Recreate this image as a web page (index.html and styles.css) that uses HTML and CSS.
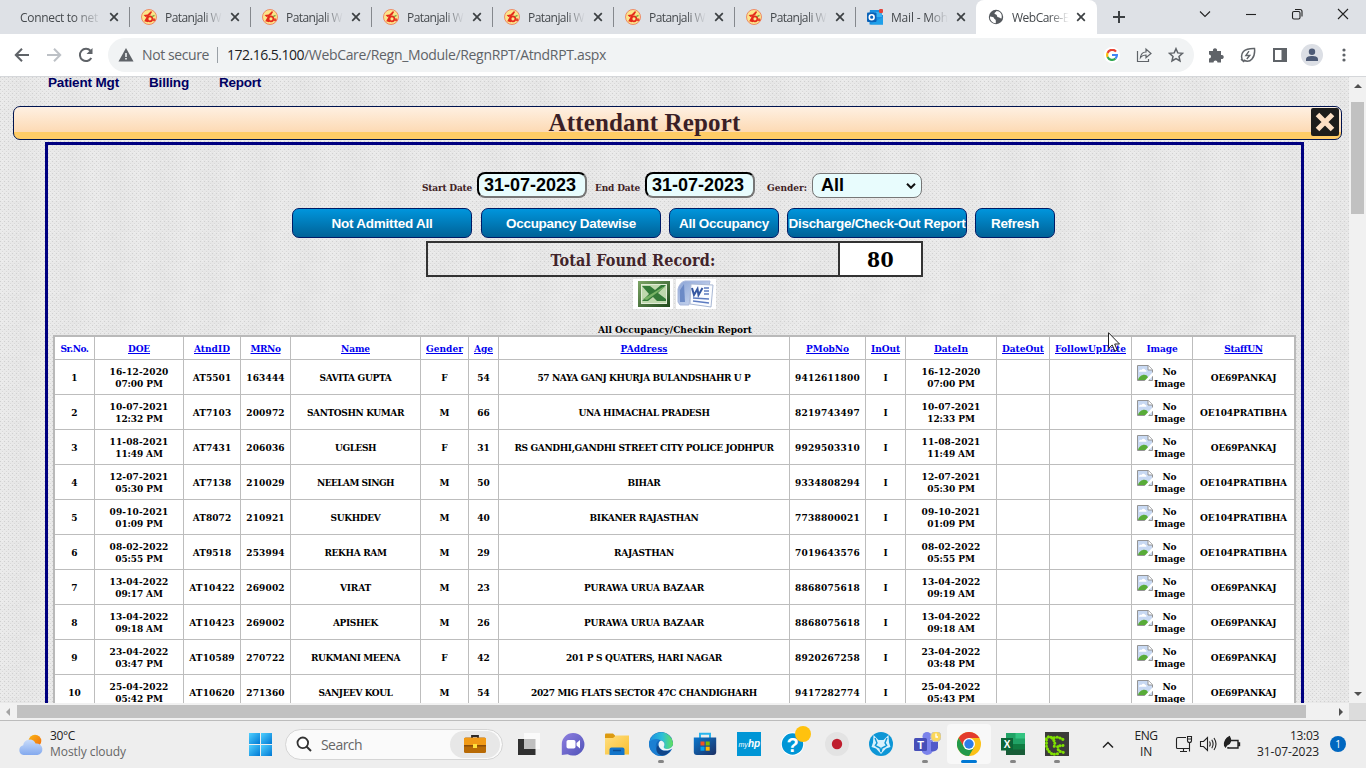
FILE: index.html
```html
<!DOCTYPE html>
<html lang="en">
<head>
<meta charset="utf-8">
<title>WebCare</title>
<link rel="stylesheet" href="styles.css">
</head>
<body>
<svg class="defs" width="0" height="0">
  <defs>
    <linearGradient id="gWin" x1="0" y1="0" x2="1" y2="1"><stop offset="0" stop-color="#4fd0ff"/><stop offset="1" stop-color="#0078d4"/></linearGradient>
    <linearGradient id="gCloud" x1="0" y1="0" x2="0" y2="1"><stop offset="0" stop-color="#c9dcfa"/><stop offset="1" stop-color="#83a9ee"/></linearGradient>
    <linearGradient id="gSun" x1="0" y1="0" x2="1" y2="1"><stop offset="0" stop-color="#fbb813"/><stop offset="1" stop-color="#f06a10"/></linearGradient>
    <linearGradient id="gChat" x1="0" y1="0" x2="1" y2="1"><stop offset="0" stop-color="#8f7fe0"/><stop offset="1" stop-color="#4f52b8"/></linearGradient>
    <linearGradient id="gEdge" x1="0" y1="0" x2="1" y2="0"><stop offset="0" stop-color="#1c8fe0"/><stop offset=".55" stop-color="#2cbfd8"/><stop offset="1" stop-color="#62e05c"/></linearGradient>
    <linearGradient id="gStore" x1="0" y1="0" x2="1" y2="1"><stop offset="0" stop-color="#0a78cf"/><stop offset="1" stop-color="#1c2f63"/></linearGradient>
    <linearGradient id="gFold" x1="0" y1="0" x2="1" y2="1"><stop offset="0" stop-color="#ffdf80"/><stop offset="1" stop-color="#f9be2e"/></linearGradient>
    <linearGradient id="gXl" x1="0" y1="0" x2="1" y2="1"><stop offset="0" stop-color="#7da566"/><stop offset="1" stop-color="#1f4a1c"/></linearGradient>
    <linearGradient id="gWd" x1="0" y1="0" x2="1" y2="1"><stop offset="0" stop-color="#8ba4d6"/><stop offset="1" stop-color="#dbe5f6"/></linearGradient>
    <symbol id="x" viewBox="0 0 10 10"><path d="M1.2 1.2 8.8 8.8M8.8 1.2 1.2 8.8" stroke="#3c4043" stroke-width="1.7"/></symbol>
    <symbol id="pat" viewBox="0 0 16 16"><circle cx="8" cy="8" r="7.5" fill="#fbe58a" stroke="#ee8a68" stroke-width="1"/><path d="M2.600 6 6.500 5.600 9.800 2.200l1.400.6-2 3.200-2.700 1.500L4.500 8Z" fill="#e52b1c"/><path d="M6.800 7 4.200 11.800l2.200.6Z" fill="#e52b1c" stroke="#e52b1c" stroke-width="1.300"/><circle cx="8.900" cy="9.800" r="2.500" fill="none" stroke="#e52b1c" stroke-width="1.700"/><circle cx="13" cy="10.800" r="1.500" fill="#e8452e"/><path d="m11 7.600 2.500-1.200" stroke="#7aa940" stroke-width="1.500"/></symbol>
    <symbol id="broken" viewBox="0 0 16 16"><path d="M.5.5h10.800l4.200 4.200V15.500H.500Z" fill="#c8d9f3" stroke="#949494"/><path d="M11 .5v4.500h4.500" fill="#fff" stroke="#949494"/><path d="M2 6.800c0-2 2-2.200 2.600-1.800 1-2.200 3.600-1 3.600 0 1.500 0 1.800 1.800.8 1.800Z" fill="#fff"/><path d="M1 15c1-4 5.500-6.500 8.800-4.500L13 15Z" fill="#58ac38"/><path d="m16 7-8.500 9H11l5-5.200Z" fill="#fff"/></symbol>
  </defs>
</svg>

<header class="browser">
  <div class="tabs">
    <div class="tab first"><span class="title"><span data-w="78">Connect to net</span></span><svg class="close"><use href="#x"/></svg></div>
    <div class="tab"><svg class="fav"><use href="#pat"/></svg><span class="title"><span data-w="56">Patanjali W</span></span><svg class="close"><use href="#x"/></svg></div>
    <div class="tab"><svg class="fav"><use href="#pat"/></svg><span class="title"><span data-w="56">Patanjali W</span></span><svg class="close"><use href="#x"/></svg></div>
    <div class="tab"><svg class="fav"><use href="#pat"/></svg><span class="title"><span data-w="56">Patanjali W</span></span><svg class="close"><use href="#x"/></svg></div>
    <div class="tab"><svg class="fav"><use href="#pat"/></svg><span class="title"><span data-w="56">Patanjali W</span></span><svg class="close"><use href="#x"/></svg></div>
    <div class="tab"><svg class="fav"><use href="#pat"/></svg><span class="title"><span data-w="56">Patanjali W</span></span><svg class="close"><use href="#x"/></svg></div>
    <div class="tab"><svg class="fav"><use href="#pat"/></svg><span class="title"><span data-w="56">Patanjali W</span></span><svg class="close"><use href="#x"/></svg></div>
    <div class="tab plain"><svg class="fav" viewBox="0 0 16 16"><path d="M3 1h9v5h4v9.500H2.500V4Z" fill="#1a8fe0"/><path d="M7 3h8v5H7z" fill="#36b1f2"/><path d="m3 15.500 13-7.500v7.500Z" fill="#1fa0ea"/><rect y="3.500" width="9.500" height="9.500" rx="1" fill="#0a62b8"/><circle cx="4.700" cy="8.200" r="2.400" fill="none" stroke="#fff" stroke-width="1.600"/><circle cx="14" cy="2" r="2.200" fill="#e2453c"/></svg><span class="title"><span data-w="57">Mail - Moh</span></span><svg class="close"><use href="#x"/></svg></div>
    <div class="tab active"><svg class="fav" viewBox="0 0 16 16"><circle cx="8" cy="8" r="7.200" fill="#55595e"/><path d="M2 7.500c2 .2 4 .4 4.200 2 .1 1 1.600.6 1.600 2v2.700C4.500 14 1.600 11.500 2 7.500ZM8.500 2c-.4 1.200-2 1-2 2.500 0 1 1.600.7 2.200 1.500.6.900 0 2 1.600 2.200 1.800.1 1.500 1.300 3.200 1.300C14.800 5.500 12 2 8.500 2Z" fill="#fff"/></svg><span class="title"><span data-w="57">WebCare-E</span></span><svg class="close"><use href="#x"/></svg></div>
    <svg class="plus" viewBox="0 0 12 12"><path d="M6 0v12M0 6h12" stroke="#3c4043" stroke-width="2"/></svg>
    <div class="winbtns">
      <svg viewBox="0 0 12 12"><path d="m1 3.500 5 5 5-5" class="thin"/></svg>
      <svg viewBox="0 0 12 12"><path d="M1 6.500h10" class="thin"/></svg>
      <svg viewBox="0 0 12 12"><rect x="1.500" y="3.500" width="7.500" height="7.500" rx="1.500" class="thin"/><path d="M4 1.500h5a2 2 0 0 1 2 2V8.500" class="thin"/></svg>
      <svg viewBox="0 0 12 12"><path d="m1 1 10 10M11 1 1 11" class="thin"/></svg>
    </div>
  </div>
  <div class="toolbar">
    <svg class="nav" viewBox="0 0 16 16"><path d="M15 8H2.500M8 1.800 1.800 8 8 14.200" fill="none" stroke="#5f6368" stroke-width="2"/></svg>
    <svg class="nav" viewBox="0 0 16 16"><path d="M1 8h12.500M8 1.800 14.200 8 8 14.200" fill="none" stroke="#bdc1c6" stroke-width="2"/></svg>
    <svg class="nav" viewBox="0 0 16 16"><path d="M13.300 11A6.100 6.100 0 1 1 12.500 3.800" fill="none" stroke="#5f6368" stroke-width="2"/><path d="M14.500 1v6h-6Z" fill="#5f6368"/></svg>
    <div class="omni">
      <svg class="warn" viewBox="0 0 16 14"><path d="M8 0 15.500 13.500H.500Z" fill="#5f6368"/><path d="M8 5v4M8 10v1.600" stroke="#f1f3f4" stroke-width="1.600"/></svg>
      <span class="ns"><span data-w="67">Not secure</span></span>
      <span class="url"><span class="host" data-w="77">172.16.5.100</span><span data-w="302">/WebCare/Regn_Module/RegnRPT/AtndRPT.aspx</span></span>
      <div class="omniicons">
        <span class="goog"><svg width="12" height="12" viewBox="0 0 12 12" fill="none" stroke-width="2.200"><path d="M10 2.600A4.900 4.900 0 0 0 1.600 4" stroke="#ea4335"/><path d="M1.600 4a5 5 0 0 0 0 4" stroke="#fbbc05"/><path d="M1.600 8A4.900 4.900 0 0 0 9.500 9.500" stroke="#34a853"/><path d="M9.500 9.500A4.900 4.900 0 0 0 10.900 6H6" stroke="#4285f4"/></svg></span>
        <svg width="16" height="16" viewBox="0 0 16 16" fill="none" stroke="#5f6368" stroke-width="1.200"><path d="M1.500 4v10.500h11V12"/><path d="M4.500 10.500C5 6.500 7 5 10 5V2l5 4.500-5 4.300V8C7.500 8 6 8.500 4.500 10.500Z"/></svg>
        <svg width="16" height="16" viewBox="0 0 16 16" fill="none" stroke="#5f6368" stroke-width="1.500"><path d="m8 1.700 1.800 4.200 4.700.4-3.500 3.100 1 4.600L8 11.600 4 14l1-4.600L1.500 6.300l4.700-.4Z"/></svg>
      </div>
    </div>
    <div class="ext">
      <svg viewBox="0 0 16 16"><path d="M1 4h4a2.100 2.100 0 1 1 4 0h4v4a2.100 2.100 0 1 1 0 4v3.500H9.500a2 2 0 1 0-4 0H1V11.500a2 2 0 1 0 0-4Z" fill="#5f6368"/></svg>
      <svg viewBox="0 0 16 16" fill="none" stroke="#5f6368" stroke-width="1.500"><path d="M2.500 13.500C-.5 6 4 1.200 14.500 1.500 15.500 10 10.500 17 3.500 13M1 12.200 4.200 15"/><path d="M9 4.200 5.800 8.500h4L6.800 12" stroke-width="1.300"/></svg>
      <svg viewBox="0 0 16 16"><path d="M2 2h12v12H2z" fill="none" stroke="#5f6368" stroke-width="2"/><path d="M9.500 2H14v12H9.500z" fill="#5f6368"/></svg>
      <span class="avatar"><svg viewBox="0 0 14 14" width="14" height="14"><circle cx="7" cy="3.700" r="3.200" fill="#4e5b76"/><path d="M1 13V11.500C1 8.500 4 8 7 8s6 .5 6 3.500V13Z" fill="#4e5b76"/></svg></span>
      <svg viewBox="0 0 16 16" fill="#5f6368"><circle cx="8" cy="3" r="1.600"/><circle cx="8" cy="8" r="1.600"/><circle cx="8" cy="13" r="1.600"/></svg>
    </div>
  </div>
</header>

<main class="viewport">
  <div class="page">
    <nav class="menu"><span data-w="71">Patient Mgt</span><span data-w="40">Billing</span><span data-w="42">Report</span></nav>
    <div class="titlebar"><h1><span data-w="192">Attendant Report</span></h1>
      <svg class="closebox" viewBox="0 0 28 28"><rect width="28" height="28" rx="2" fill="#1d1d1b"/><path d="m6.500 6.500 15 15M21.500 6.500l-15 15" stroke="#fde0c4" stroke-width="5"/></svg>
    </div>
    <section class="panel">
      <div class="filters">
        <label><span data-w="50">Start Date</span></label><div class="date">31-07-2023</div>
        <label class="l2"><span data-w="45">End Date</span></label><div class="date">31-07-2023</div>
        <label class="l3"><span data-w="40">Gender:</span></label><div class="select">All<svg viewBox="0 0 10 6"><path d="m1 .8 4 4 4-4" fill="none" stroke="#111" stroke-width="2"/></svg></div>
      </div>
      <div class="buttons">
        <button class="w180"><span data-w="101">Not Admitted All</span></button>
        <button class="w180 g1"><span data-w="130">Occupancy Datewise</span></button>
        <button class="w110"><span data-w="90">All Occupancy</span></button>
        <button class="w180"><span data-w="177">Discharge/Check-Out Report</span></button>
        <button class="w80"><span data-w="48">Refresh</span></button>
      </div>
      <div class="total"><div class="lbl"><span data-w="165">Total Found Record:</span></div><div class="num"><span data-w="27">80</span></div></div>
      <div class="exports">
        <svg viewBox="0 0 40 30"><path d="M0 0h40v30H0z" fill="#fff"/><path d="M5 2h32v26H5z" fill="url(#gXl)"/><path d="M8 5h26v20H8z" fill="#e2edd8"/><path d="M9 6h24v18H9z" fill="#bfd8ad"/><path d="M9 7h8l5 4 6-5h5l-8 8 8 6v2h-9l-4-4-5 4H9l7-7Z" fill="#347a38"/><path d="m10 20 20-12h2L14 21Z" fill="#78b365"/></svg>
        <svg viewBox="0 0 40 30"><path d="M0 0h40v30H0z" fill="#fff"/><path d="M9 2h25l-1 5-18 0-2 19H4L2 23V10Q4 3 9 2Z" fill="url(#gWd)" stroke="#a9b8dc"/><path d="M8 5 4 11v12h5Z" fill="#6c8ac6"/><path d="m15 5 22 1-2 22-21-3Z" fill="#fafcff" stroke="#a9b8d4"/><path d="m16 9 2 7 3.500-6 1 6 4-7" fill="none" stroke="#3557a0" stroke-width="2"/><path d="M28 9h5M28 12h5M28 15h5M17 19l16 1M17 22l16 2" stroke="#5c7bc0" stroke-width="1.400"/></svg>
      </div>
      <div class="caption"><span data-w="154">All Occupancy/Checkin Report</span></div>
      <table class="grid">
        <colgroup><col class="c40"><col class="c89"><col class="c57"><col class="c50"><col class="c130"><col class="c48"><col class="c30"><col class="c291"><col class="c76"><col class="c40"><col class="c91"><col class="c53"><col class="c82"><col class="c61"><col class="c101"></colgroup>
        <thead><tr><th><span data-w="28">Sr.No.</span></th><th><a data-w="22">DOE</a></th><th><a data-w="36">AtndID</a></th><th><a data-w="30">MRNo</a></th><th><a data-w="29">Name</a></th><th><a data-w="37">Gender</a></th><th><a data-w="19">Age</a></th><th><a data-w="47">PAddress</a></th><th><a data-w="43">PMobNo</a></th><th><a data-w="29">InOut</a></th><th><a data-w="34">DateIn</a></th><th><a data-w="42">DateOut</a></th><th><a data-w="71">FollowUpDate</a></th><th><span data-w="31">Image</span></th><th><a data-w="38">StaffUN</a></th></tr></thead>
        <tbody id="rows"></tbody>
      </table>
    </section>
  </div>
  <div class="vscroll"><svg viewBox="0 0 8 4"><path d="m0 4 4-4 4 4Z"/></svg><div class="vthumb"></div><svg class="down" viewBox="0 0 8 4"><path d="m0 0 4 4 4-4Z"/></svg></div>
  <svg class="cursor" viewBox="0 0 12 20"><path d="M.5.700v15.800l3.700-3.500 2.600 6 2.400-1-2.500-6h4.800Z" fill="#fff" stroke="#222"/></svg>
</main>
<div class="hscroll"><svg viewBox="0 0 4 8"><path d="M4 0 0 4l4 4Z" fill="#a3a3a3"/></svg><div class="hthumb"></div><svg class="right" viewBox="0 0 4 8"><path d="m0 0 4 4-4 4Z" fill="#505050"/></svg><div class="corner"></div></div>

<footer class="taskbar">
  <svg class="weather" viewBox="0 0 26 22"><circle cx="17" cy="7" r="6.300" fill="url(#gSun)"/><path d="M5.500 21a5 5 0 0 1-.3-9.800A6.500 6.500 0 0 1 17.600 9.500 5.800 5.800 0 0 1 19.500 21Z" fill="url(#gCloud)"/></svg>
  <div class="wtext"><div class="deg"><span data-w="25">30°C</span></div><div class="cond"><span data-w="76">Mostly cloudy</span></div></div>
  <svg class="start" viewBox="0 0 23 23" fill="url(#gWin)"><rect width="11" height="11"/><rect x="12" width="11" height="11"/><rect y="12" width="11" height="11"/><rect x="12" y="12" width="11" height="11"/></svg>
  <div class="search"><svg class="lens" viewBox="0 0 16 16"><circle cx="6.800" cy="6.800" r="5.300" fill="#fff" stroke="#333" stroke-width="1.800"/><path d="m10.500 10.500 4.500 4.500" stroke="#333" stroke-width="2"/></svg><span data-w="41">Search</span>
    <div class="case"><svg viewBox="0 0 22 18"><path d="M8 3V1h6v2" fill="none" stroke="#2d2926" stroke-width="1.800"/><rect y="2.500" width="22" height="15.500" rx="1.500" fill="#b86a05"/><path d="M0 3h22v7.500H0z" fill="#f19a16"/><path d="M0 10h22v1.500H0z" fill="#8a4c08"/><rect x="9" y="9" width="4" height="4" fill="#ffe13b"/></svg></div>
  </div>
  <div class="apps">
    <div class="app"><svg viewBox="0 0 24 24"><path d="M1 7h17.500v16H1z" fill="#303030"/><path d="M7 1h16v16H7z" fill="#fafafa"/><path d="M7 7h11.500v10H7z" fill="#bfbfbf"/></svg></div>
    <div class="app"><svg viewBox="0 0 24 24"><path d="M12 1a11.300 11.300 0 1 1-5.300 21.200L.8 23V12A11.200 11.200 0 0 1 12 1Z" fill="url(#gChat)"/><rect x="5.500" y="8" width="9" height="8.500" rx="1.800" fill="#fff"/><path d="m15.500 11 3.500-3v8.500l-3.500-3Z" fill="#fff"/></svg></div>
    <div class="app"><svg viewBox="0 0 24 24"><path d="M0 2.500Q0 1.500 1 1.500h7l2.500 2.500V9H0Z" fill="#dc9a10"/><path d="M0 6h8l3-2.500h13v19H0Z" fill="url(#gFold)"/><path d="M4.500 23v-5.500q0-2 2-2H17.500q2 0 2 2V23Z" fill="#1274c9"/><path d="M8 18.500h8" stroke="#0a4d94" stroke-width="1.500"/></svg></div>
    <div class="app run"><svg viewBox="0 0 24 24"><circle cx="12" cy="12" r="12" fill="#1269bd"/><path d="M.2 10.500A12 12 0 0 1 24 11c0 4-3 6-6.500 6-2.500 0-3.300-1.200-2.700-2 1.800-3 0-7-4.300-7C5.500 7.800 2 9.500.2 10.500Z" fill="url(#gEdge)"/><path d="M.2 10C3 7 8 6 11 8c-3 1-5 4-4 8 1 3.500 4 6 7 7.800C6 25-1 18 .2 10Z" fill="#1b7fd2"/><path d="M9.500 13c0 5 5 7 12 5.200C18 24 11 25.500 8 20c-1.200-2.500-.5-5.500 1.500-7Z" fill="#10468a"/><path d="M14.700 15c1.800-2.500.4-5.800-2.500-6.500C9.500 9 8.800 13 10.500 15.500c2.500 3.800 7 3.500 10.500 2.200l3-1.500v-3c-1.500 4-8.500 5.200-9.300 1.800Z" fill="#edf5f8"/></svg></div>
    <div class="app"><svg viewBox="0 0 24 24"><path d="M7 6V1.800h10V6" fill="none" stroke="#29b5ee" stroke-width="2"/><path d="M.8 5.500h22.400V20q0 3-3 3H3.800q-3 0-3-3Z" fill="url(#gStore)"/><path d="M7.500 9.500h4v4h-4z" fill="#f25022"/><path d="M12.700 9.500h4v4h-4z" fill="#7fba00"/><path d="M7.500 14.700h4v4h-4z" fill="#00a4ef"/><path d="M12.700 14.700h4v4h-4z" fill="#ffb900"/></svg></div>
    <div class="app"><svg viewBox="0 0 24 24"><path d="M0 0h24v24H0z" fill="#0096d6"/><text x="1.500" y="14.500" class="my">my</text><text x="11" y="15" class="hp">hp</text></svg></div>
    <div class="app"><svg viewBox="0 0 24 24"><circle cx="11.500" cy="12" r="11.700" fill="#fff"/><circle cx="11.500" cy="12" r="10.700" fill="#0096d6"/><text x="11.500" y="19.500" class="q">?</text></svg><span class="dot"></span></div>
    <div class="app"><svg viewBox="0 0 24 24"><circle cx="12" cy="12" r="12" fill="#e3e3e3"/><circle cx="12" cy="12" r="5.200" fill="#bf1e2e"/></svg></div>
    <div class="app"><svg viewBox="0 0 24 24"><circle cx="12" cy="12" r="12" fill="#0d96d6"/><path d="m4.500 3 5 5h5l5-5 .500 7.500 1.500 4.500-4.500 1.500L12 22l-5-5.500L2.500 15 4 10.500Z" fill="#d9f0fb"/><path d="m6 6 2 5-2 3M18 6l-2 5 2 3M7 14l4 2 1 4 1-4 4-2" fill="none" stroke="#0d96d6" stroke-width="1.400"/></svg></div>
    <div class="app run"><svg class="teams" viewBox="0 0 28 24"><circle cx="14" cy="4.500" r="4.500" fill="#7b83eb"/><path d="M9 8h11v10a6 6 0 0 1-11 2Z" fill="#7b83eb"/><path d="M18 10h7v6a5 5 0 0 1-7 3Z" fill="#5059c9"/><rect x="1" y="6" width="13" height="13" rx="1.500" fill="#464eb8"/><text x="7.500" y="16.500" class="t">T</text><circle cx="23" cy="4.500" r="5.200" fill="#fbd85b" stroke="#bfc0c3"/><path d="M23 1.500V5h2" fill="none" stroke="#fff" stroke-width="1.300"/></svg></div>
    <div class="app current"><svg viewBox="0 0 24 24"><circle cx="12" cy="12" r="12" fill="#fbc116"/><path d="M1.600 6A12 12 0 0 1 22.400 6H12L7 15Z" fill="#e33b2e"/><path d="M1.600 6A12 12 0 0 0 12 24l5.200-9H7Z" fill="#229a4b"/><circle cx="12" cy="12" r="6" fill="#fff"/><circle cx="12" cy="12" r="4.700" fill="#2c7de9"/></svg></div>
    <div class="app run"><svg viewBox="0 0 24 24"><path d="M5 1h19v22H5z" fill="#21a366"/><path d="M14.500 1H24v5.500h-9.500z" fill="#33c481"/><path d="M5 12h19v11H5z" fill="#107c41"/><path d="M5 17.500h19V23H5z" fill="#185c37"/><path d="M0 6h12v12.500H0z" fill="#0c6437"/><text x="6" y="16" class="xl">X</text></svg></div>
    <div class="app run"><svg viewBox="0 0 24 24"><path d="M0 0h24v24H0z" fill="#3c3b39"/><path d="M1 7 4 4.500 8 6l5-1 5 2.500M1.500 8v7l2 4 4 3.500 7-1M18 13.500l-5.500.5 1 5 5 1.500M7 6l3 4-1 6" fill="none" stroke="#7fe000" stroke-width="3" stroke-linecap="round" stroke-dasharray=".1 3"/></svg></div>
  </div>
  <svg class="chev" viewBox="0 0 12 12"><path d="m1 8.500 5-5 5 5" class="thin s"/></svg>
  <div class="lang"><span data-w="23">ENG</span><span data-w="12">IN</span></div>
  <div class="tray">
    <svg viewBox="0 0 18 18" class="ln"><path d="M11 2.500H3q-1.500 0-1.500 1.500v8.500q0 1 1 1H14M5 16.500h7M8.500 13.500v3M14.500 8v8.500M12.500 1.500h4v4a2 2 0 0 1-4 0ZM12.500 4h4"/></svg>
    <svg viewBox="0 0 18 18" class="ln"><path d="M1.500 6.500h3l4-4v13l-4-4h-3ZM10.500 6.500q1.500 2.500 0 5M12.800 4.800q2.600 4.200 0 8.400M15 3q4 6 0 12"/></svg>
    <svg viewBox="0 0 18 18" class="ln"><path d="M8 5.500h7v7.500H5V12M15 8h1.500v2.500H15" stroke-width="1.400"/><path d="M1.500 10.500C1 6 3 3.500 6.500 1.500c1.800 3 1.800 7-2.500 8.500L2.500 12Z" fill="#222"/></svg>
  </div>
  <div class="clock"><span data-w="29">13:03</span><span data-w="62">31-07-2023</span></div>
  <div class="notif">1</div>
</footer>
<script src="app.js"></script>
</body>
</html>
```
FILE: app.js
```js
// Each value is [text, width in px] or plain text.
const rows = [
  ['16-12-2020', '07:00 PM', 'AT5501', '163444', ['SAVITA GUPTA', 72], 'F', '54', ['57 NAYA GANJ KHURJA BULANDSHAHR U P', 213], '9412611800', '07:00 PM', 0],
  ['10-07-2021', '12:32 PM', 'AT7103', '200972', ['SANTOSHN KUMAR', 97], 'M', '66', ['UNA HIMACHAL PRADESH', 131], '8219743497', '12:33 PM', 1],
  ['11-08-2021', '11:49 AM', 'AT7431', '206036', ['UGLESH', 41], 'F', '31', ['RS GANDHI,GANDHI STREET CITY POLICE JODHPUR', 259], '9929503310', '11:49 AM', 0],
  ['12-07-2021', '05:30 PM', 'AT7138', '210029', ['NEELAM SINGH', 77], 'M', '50', ['BIHAR', 33], '9334808294', '05:30 PM', 1],
  ['09-10-2021', '01:09 PM', 'AT8072', '210921', ['SUKHDEV', 50], 'M', '40', ['BIKANER RAJASTHAN', 109], '7738800021', '01:09 PM', 1],
  ['08-02-2022', '05:55 PM', 'AT9518', '253994', ['REKHA RAM', 62], 'M', '29', ['RAJASTHAN', 60], '7019643576', '05:55 PM', 1],
  ['13-04-2022', '09:17 AM', 'AT10422', '269002', ['VIRAT', 31], 'M', '23', ['PURAWA URUA BAZAAR', 120], '8868075618', '09:19 AM', 0],
  ['13-04-2022', '09:18 AM', 'AT10423', '269002', ['APISHEK', 45], 'M', '26', ['PURAWA URUA BAZAAR', 120], '8868075618', '09:18 AM', 0],
  ['23-04-2022', '03:47 PM', 'AT10589', '270722', ['RUKMANI MEENA', 89], 'F', '42', ['201 P S QUATERS, HARI NAGAR', 156], '8920267258', '03:48 PM', 0],
  ['25-04-2022', '05:42 PM', 'AT10620', '271360', ['SANJEEV KOUL', 74], 'M', '54', ['2027 MIG FLATS SECTOR 47C CHANDIGHARH', 226], '9417282774', '05:43 PM', 0]
];
const s = (text, w) => `<span data-w="${w}">${text}</span>`;
const stamp = (d, t) => `${s(d, 59)}<br>${s(t, 47.5)}`;
document.getElementById('rows').innerHTML = rows.map((r, i) => {
  const n = String(i + 1);
  const cells = [
    s(n, n.length * 6.3), stamp(r[0], r[1]), s(r[2], r[2].length > 6 ? 45.5 : 38.5), s(r[3], 38.5),
    s(...r[4]), r[5], s(r[6], 12.5), s(...r[7]), s(r[8], 65), 'I', stamp(r[0], r[9]), '', '',
    `<div class="noimg"><svg><use href="#broken"/></svg><div>${s('No', 14)}<br>${s('Image', 31)}</div></div>`,
    r[10] ? s('OE104PRATIBHA', 87) : s('OE69PANKAJ', 65.5)
  ];
  return '<tr>' + cells.map(c => `<td>${c}</td>`).join('') + '</tr>';
}).join('');

// Track each label to its design width.
document.querySelectorAll('[data-w]').forEach(el => {
  const n = el.textContent.length;
  const gap = (parseFloat(el.dataset.w) - el.getBoundingClientRect().width) / n;
  el.style.letterSpacing = gap.toFixed(3) + 'px';
});
```
FILE: styles.css
```css
* { box-sizing: border-box; }
body { margin: 0; width: 1366px; height: 768px; overflow: hidden; font-family: "Open Sans", "Noto Sans", sans-serif; display: flex; flex-direction: column; background: #fff; }
.defs { position: absolute; }
svg { display: block; flex: none; }
[data-w] { display: inline-block; white-space: nowrap; }

.browser { height: 77px; border-bottom: 1px solid #d5d7da; flex: none; }
.tabs { height: 34px; background: #dee1e6; display: flex; align-items: center; }
.tab { width: 121px; height: 34px; display: flex; align-items: center; padding-left: 11px; font-size: 12px; color: #45494d; flex: none; }
.tab::after { content: ""; width: 1px; height: 20px; background: #85888d; margin-left: 10px; }
.tab.plain::after, .tab.active::after { background: transparent; }
.tab.first { width: 130px; padding-left: 20px; }
.tab.first .title { width: 82px; margin-left: 0; }
.fav { width: 16px; height: 16px; }
.title { width: 57px; margin-left: 8px; white-space: nowrap; -webkit-mask-image: linear-gradient(90deg, #000 65%, transparent); mask-image: linear-gradient(90deg, #000 65%, transparent); }
.close { width: 10px; height: 10px; margin-left: 8px; }
.tab.first .close { margin-left: 7px; }
.tab.active { background: #fff; border-radius: 8px 8px 0 0; margin-left: -1px; padding-left: 12px; }
.tab.active .close { margin-left: 7px; }
.plus { width: 12px; height: 12px; margin-left: 16px; }
.winbtns { display: flex; gap: 34px; margin: -6px 0 0 74px; }
.winbtns svg { width: 12px; height: 12px; }
.thin { fill: none; stroke: #222; stroke-width: 1.1; }
.thin.s { stroke-width: 1.5; }
.toolbar { height: 42px; display: flex; align-items: center; padding-left: 14px; }
.nav { width: 16px; height: 16px; margin-right: 16px; }
.omni { width: 1086px; height: 34px; border-radius: 17px; background: #f1f3f4; margin-left: -2px; display: flex; align-items: center; padding: 0 10px; font-size: 14px; color: #5f6368; }
.warn { width: 16px; height: 14px; }
.ns { margin-left: 8px; width: 76px; border-right: 1px solid #9aa0a6; height: 16px; line-height: 15px; }
.url { margin-left: 9px; display: flex; line-height: 16px; }
.host { color: #202124; }
.omniicons { margin-left: auto; display: flex; align-items: center; gap: 16px; }
.goog { width: 16px; height: 16px; border-radius: 50%; background: #fff; padding: 2px; }
.ext { display: flex; align-items: center; gap: 16px; margin-left: 14px; }
.ext > svg { width: 16px; height: 16px; }
.avatar { width: 22px; height: 22px; border-radius: 50%; background: #dcdfe5; padding: 4px; margin: 0 -3px; }

.viewport { height: 626px; flex: none; display: flex; position: relative; overflow: hidden; }
.page { width: 1349px; height: 626px; overflow: hidden; display: flex; flex-direction: column; background-color: #e6e6e6;
  background-image: linear-gradient(135deg, #d0d0d0 1px, transparent 1px), linear-gradient(135deg, #d8d8d8 1px, transparent 1px), linear-gradient(45deg, #efefef 1px, transparent 1px), linear-gradient(70deg, rgba(255,255,255,.2), transparent 50%, rgba(255,255,255,.2));
  background-size: 4px 4px, 4px 4px, 4px 4px, 47px 31px; background-position: 0 0, 2px 2px, 2px 0, 0 0; }
.menu { height: 29px; flex: none; display: flex; gap: 30px; padding-left: 48px; font: bold 13.5px/11px "Liberation Sans", Arial, sans-serif; color: #000062; }
.titlebar { width: 1329px; height: 34px; flex: none; margin-left: 13px; border: 1px solid #001450; border-radius: 7px; background: linear-gradient(#fef0e2 0, #fddab4 25px, #ffcc66 25px); display: flex; position: relative; justify-content: center; padding-right: 66px; }
h1 { margin: 0; font: bold 25px/32px "Liberation Serif", serif; color: #3b1f26; }
.closebox { position: absolute; right: 2px; top: 1px; width: 28px; height: 28px; }
.panel { margin: 2px 0 0 45px; width: 1259px; height: 700px; flex: none; border: 3px solid #000080; padding: 27px 5px 0; display: flex; flex-direction: column; font-family: "DejaVu Serif Condensed", "DejaVu Serif", serif; font-stretch: condensed; font-weight: bold; }
.filters { display: flex; align-items: center; margin-left: 369px; height: 26px; font-size: 10px; color: #3f2225; }
.filters label { margin-right: 5px; padding-top: 5px; }
.filters .l2 { margin-left: 8px; }
.filters .l3 { margin-left: 12px; }
.date { width: 110px; height: 26px; border: 2px inset #767676; border-color: #222 #767676 #767676 #222; border-radius: 8px; background: #e8fcfd; color: #000; font: bold 18px/22px "Liberation Sans", Arial, sans-serif; padding-left: 5px; }
.select { width: 110px; height: 25px; margin-top: 1px; border: 1px solid #767676; border-radius: 8px; background: #e8fcfd; color: #000; font: bold 18px/23px "Liberation Sans", Arial, sans-serif; padding: 0 5px 0 8px; display: flex; align-items: center; justify-content: space-between; }
.select svg { width: 10px; height: 6px; }
.buttons { display: flex; gap: 8px; margin: 10px 0 0 239px; height: 30px; }
button { flex: none; height: 30px; padding: 1px 0 0; overflow: hidden; border: 1px solid #001b66; border-radius: 7px; background: linear-gradient(#0095dc, #006297); color: #fff; font: bold 13.5px "Liberation Sans", Arial, sans-serif; white-space: nowrap; }
.w180 { width: 180px; } .w110 { width: 110px; } .w80 { width: 80px; }
.g1 { margin-left: 1px; }
.total { display: flex; margin: 3px 0 0 373px; width: 497px; height: 36px; border: 2px solid #333; color: #42242a; text-align: center; line-height: 35px; flex: none; }
.lbl { width: 410px; font-size: 16px; }
.num { flex: 1; border-left: 2px solid #333; background: #fff; color: #000; font-size: 21px; line-height: 34px; height: 32px; }
.exports { display: flex; gap: 3px; margin: 2px 0 0 580px; }
.exports svg { width: 40px; height: 30px; }
.caption { text-align: center; font-size: 10px; line-height: 14px; margin-top: 14px; height: 12px; padding-left: 1px; }
.grid { table-layout: fixed; width: 1243px; border: 2px solid #b9b9b9; border-spacing: 0; background: #fff; font-size: 10px; line-height: 12px; text-align: center; color: #000; flex: none; }
.grid th, .grid td { padding: 1px 0 0; border-right: 1px solid #bdbdbd; border-bottom: 1px solid #bdbdbd; height: 35px; }
.grid th { height: 23px; color: #0000ee; padding-top: 2px; }
.grid th:last-child, .grid td:last-child { border-right: 0; }
.grid th a { text-decoration: underline; }
.c40 { width: 40px; } .c89 { width: 89px; } .c57 { width: 57px; } .c50 { width: 50px; } .c130 { width: 130px; } .c48 { width: 48px; } .c30 { width: 30px; } .c291 { width: 291px; } .c76 { width: 76px; } .c91 { width: 91px; } .c53 { width: 53px; } .c82 { width: 82px; } .c61 { width: 61px; } .c101 { width: 101px; }
.noimg { display: flex; padding-left: 5px; gap: 1px; }
.noimg svg { width: 16px; height: 16px; margin-top: -1px; }
.vscroll { width: 17px; height: 626px; background: #f1f1f1; display: flex; flex-direction: column; align-items: center; padding: 7px 0; }
.vscroll svg { width: 8px; height: 4px; fill: #505050; }
.vthumb { width: 13px; height: 112px; margin-top: 14px; background: #c1c1c1; }
.down { margin-top: auto; }
.cursor { position: absolute; left: 1108px; top: 255px; width: 12px; height: 20px; }
.hscroll { height: 17px; flex: none; background: #f1f1f1; display: flex; align-items: center; padding-left: 6px; }
.hscroll svg { width: 4px; height: 8px; }
.hthumb { width: 1289px; height: 13px; background: #c1c1c1; margin-left: 7px; }
.right { margin-left: 33px; }
.corner { width: 17px; height: 17px; background: #dcdcdc; margin-left: auto; }

.taskbar { height: 48px; flex: none; background: #eee; border-top: 1px solid #bcbcbc; display: flex; align-items: center; font-size: 12px; color: #222; }
.weather { width: 26px; height: 22px; margin-left: 18px; }
.wtext { margin: -2px 0 0 6px; width: 199px; line-height: 16px; }
.cond { color: #666; }
.start { width: 23px; height: 23px; }
.search { width: 218px; height: 31px; border: 1px solid #d5d5d5; border-radius: 16px; background: #fafafa; margin: -1px 0 0 13px; display: flex; align-items: center; padding-left: 10px; font-size: 14px; color: #666; }
.lens { width: 16px; height: 16px; margin-right: 9px; }
.case { width: 50px; height: 27px; border-radius: 14px; background: #e7e7e7; margin-left: auto; margin-right: 2px; display: flex; align-items: center; justify-content: center; }
.case svg { width: 22px; height: 18px; }
.apps { display: flex; margin: -1px 0 0 4px; }
.app { width: 44px; height: 40px; display: flex; align-items: center; justify-content: center; position: relative; }
.app svg { width: 24px; height: 24px; }
.app svg.teams { width: 28px; margin-left: 3px; }
.app.run::after { content: ""; position: absolute; bottom: 1px; left: 19px; width: 6px; height: 3px; border-radius: 2px; background: #858585; }
.app.current { background: #f8f8f8; border-radius: 4px; }
.app.current::after { content: ""; position: absolute; bottom: 1px; left: 14px; width: 16px; height: 3px; border-radius: 2px; background: #0078d4; }
.dot { position: absolute; left: 24px; top: 2px; width: 16px; height: 16px; border-radius: 50%; background: #ffc20e; }
.my { font: italic 7px "Liberation Sans", sans-serif; fill: #fff; }
.hp { font: italic bold 10px "Liberation Sans", sans-serif; fill: #fff; }
.q { font: bold 20px "Liberation Sans", sans-serif; fill: #fff; text-anchor: middle; }
.t { font: bold 11px "Liberation Sans", sans-serif; fill: #fff; text-anchor: middle; }
.xl { font: bold 10px "Liberation Sans", sans-serif; fill: #fff; text-anchor: middle; }
.chev { width: 12px; height: 12px; margin-left: 23px; }
.lang { display: flex; flex-direction: column; align-items: center; width: 24px; margin: -1px 0 0 20px; line-height: 16px; }
.tray { display: flex; gap: 6px; margin: -1px 0 0 17px; }
.tray svg { width: 18px; height: 18px; }
.ln { fill: none; stroke: #222; stroke-width: 1.1; }
.clock { display: flex; flex-direction: column; align-items: flex-end; width: 62px; margin: -2px 0 0 16px; line-height: 16px; }
.notif { width: 16px; height: 16px; border-radius: 50%; background: #0067c0; color: #fff; font-size: 10px; line-height: 16px; text-align: center; margin: -1px 0 0 11px; }
```
